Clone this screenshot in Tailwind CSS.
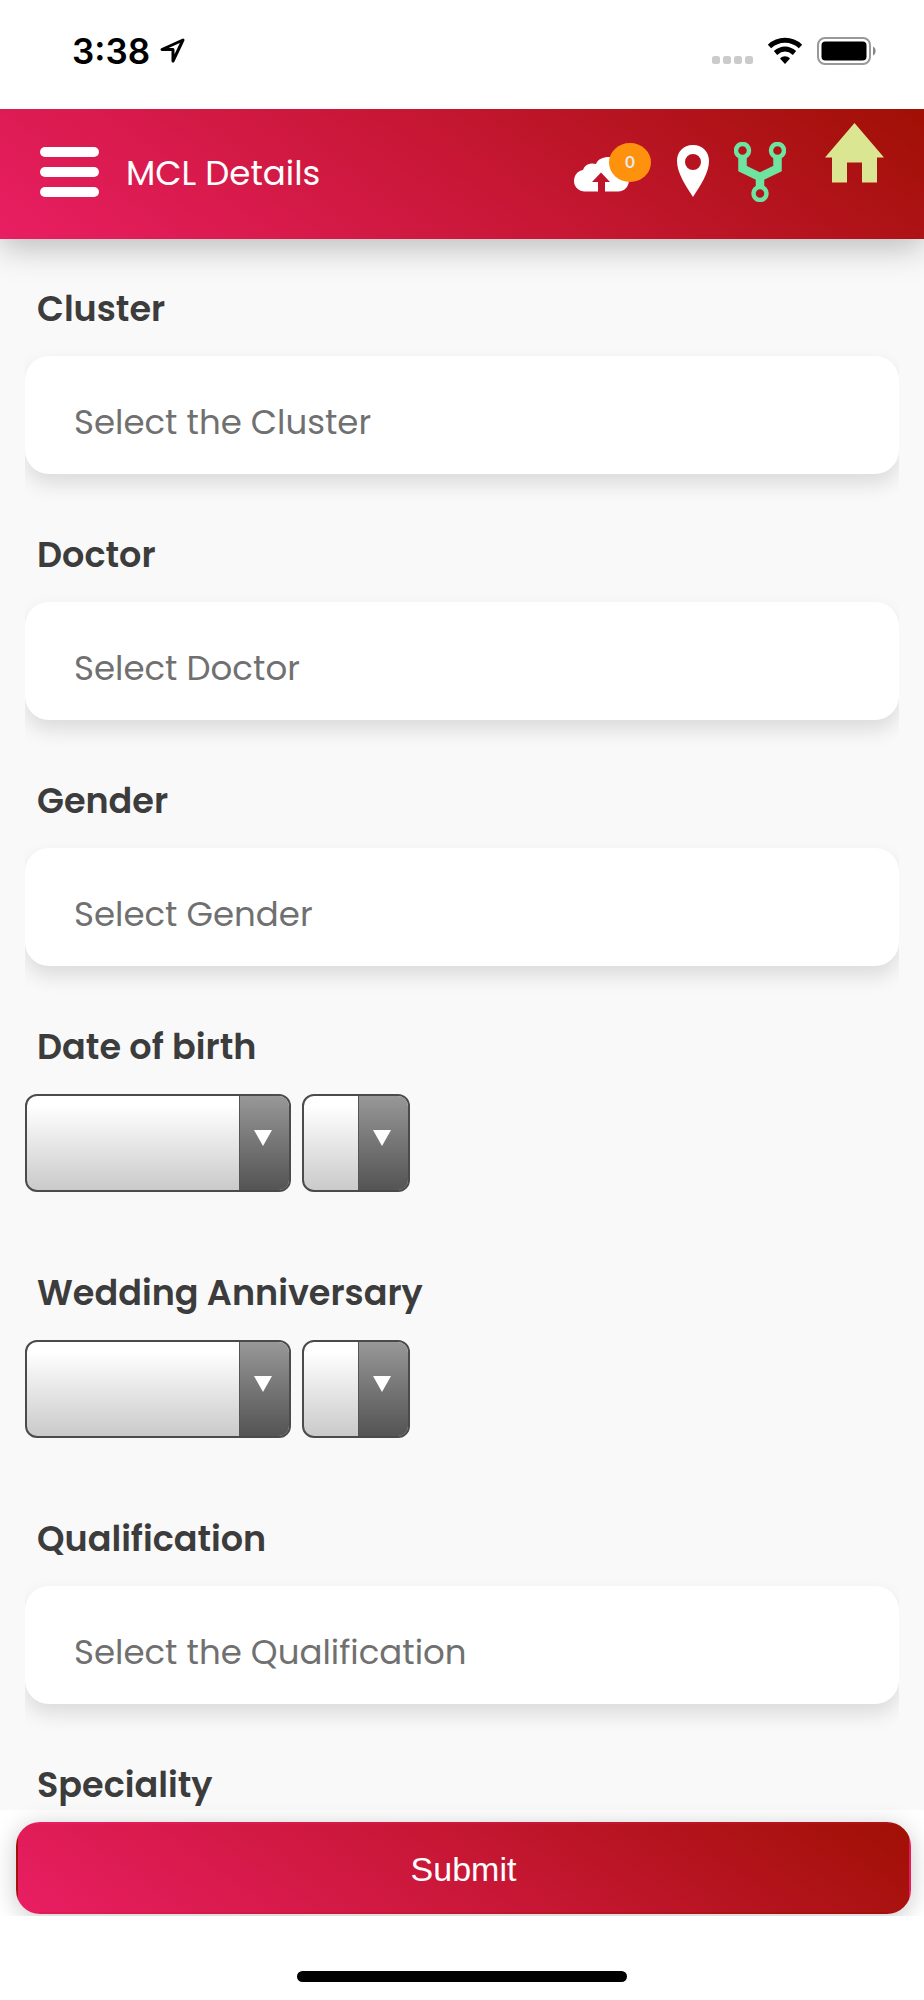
<!DOCTYPE html>
<html lang="en">
<head>
  <meta charset="UTF-8">
  <meta name="viewport" content="width=device-width, initial-scale=1.0">
  <title>MCL Details</title>
  <script src="https://cdn.jsdelivr.net/npm/@tailwindcss/browser@4"></script>
</head>
<body class="bg-white font-['Poppins','Inter',sans-serif] text-[34px] text-[#3c3c3c]">
  <div class="flex flex-col min-h-screen">

    <!-- Status bar -->
    <div class="relative z-20 flex items-center justify-between h-[109px] pl-[72px] pr-12 pb-2 bg-white text-black">
      <div class="flex items-center gap-2">
        <span class="font-['Inter',sans-serif] text-[35px] leading-10 font-semibold">3:38</span>
        <svg class="w-7 h-7" viewBox="0 0 28 28" fill="none" stroke="currentColor" stroke-width="3" stroke-linejoin="round">
          <path d="M25 3 4 12.500H15V24Z" />
        </svg>
      </div>
      <div class="flex items-center gap-[13px]">
        <svg class="w-[42px] h-7" viewBox="0 0 42 28" fill="#cbcbcb">
          <rect x="0" y="19" width="8" height="8" rx="2.500" />
          <rect x="11" y="19" width="8" height="8" rx="2.500" />
          <rect x="22" y="19" width="8" height="8" rx="2.500" />
          <rect x="33" y="19" width="8" height="8" rx="2.500" />
        </svg>
        <svg class="w-9 h-7" viewBox="0 0 36 28" fill="none" stroke="currentColor" stroke-width="5">
          <path d="M2.500 9.500C11.500 1.300 24.500 1.300 33.500 9.500" />
          <path d="M8.500 16C14.500 10.800 21.500 10.800 27.500 16" />
          <path d="M13 21.500C16 18.500 20 18.500 23 21.500L18 27Z" fill="currentColor" stroke="none" />
        </svg>
        <svg class="w-[60px] h-7" viewBox="0 0 60 28">
          <rect x="2" y="1" width="52" height="26" rx="7" fill="none" stroke="#999" stroke-width="2" />
          <rect x="5.500" y="4.500" width="45" height="19" rx="4" />
          <path d="M57 9.500C60.500 11 60.500 17 57 18.500Z" fill="#888" />
        </svg>
      </div>
    </div>

    <!-- Header -->
    <header class="relative z-10 flex items-center h-[130px] px-10 pb-1 bg-linear-[35deg,#e91e63,#c81736_50%,#a01004] shadow-[0_8px_32px_rgba(0,0,0,0.26)] text-white">
      <button type="button" aria-label="Menu" class="flex flex-col gap-2.5 w-[59px]">
        <span class="h-2.5 rounded-full bg-white"></span>
        <span class="h-2.5 rounded-full bg-white"></span>
        <span class="h-2.5 rounded-full bg-white"></span>
      </button>
      <h1 class="ml-[27px] pt-0.5 font-normal">MCL Details</h1>

      <div class="flex items-center self-stretch ml-auto">
        <button type="button" aria-label="Upload" class="relative w-[77px] h-[60px]">
          <svg class="w-[77px] h-[60px]" viewBox="0 0 77 60" fill="currentColor">
            <path d="M11 49.500H24V40H18L27 30.500 36 40H31V49.500H44C51 49.500 55 44 55 38 55 26 48 15 35 15 29 15 24 17 22 22 17 20.500 11 22 9 28 3 29 0 34 0 39 0 45 5 49.500 11 49.500Z" />
          </svg>
          <span class="absolute right-0 top-px flex items-center justify-center w-[42px] h-[39px] pb-0.5 rounded-[50%] bg-[#ff920c] font-['Inter',sans-serif] text-base font-semibold text-gray-200">0</span>
        </button>
        <button type="button" aria-label="Location" class="ml-[25px]">
          <svg class="w-[34px] h-[54px]" viewBox="0 0 34 54" fill="currentColor">
            <path fill-rule="evenodd" d="M17 0C7 0 1 7 1 16 1 28 10 41 17 52 24 41 33 28 33 16 33 7 27 0 17 0ZM17 9A8 8 0 1 1 17 25 8 8 0 0 1 17 9Z" />
          </svg>
        </button>
        <button type="button" aria-label="Hierarchy" class="ml-6">
          <svg class="w-[52px] h-[60px]" viewBox="0 0 52 60" fill="none" stroke="#6fe3a0">
            <circle cx="8.500" cy="8.500" r="6.500" stroke-width="4.500" />
            <circle cx="43.500" cy="8.500" r="6.500" stroke-width="4.500" />
            <circle cx="26" cy="51.500" r="6.500" stroke-width="4.500" />
            <path d="M8.500 16V26.500L26 35 43.500 26.500V16M26 34V44" stroke-width="8.500" />
          </svg>
        </button>
        <a href="#" aria-label="Home" class="self-start mt-3.5 ml-[39px]">
          <svg class="w-[59px] h-[60px]" viewBox="0 0 59 60" fill="#dbe692">
            <path d="M29.500 0 59 34.500H52V59.500H37V39.500H22V59.500H7V34.500H0Z" />
          </svg>
        </a>
      </div>
    </header>

    <!-- Form -->
    <form id="mcl-form" class="flex-1 px-[25px] pt-[46px] bg-[#f9f9f9]">
      <div class="overflow-x-clip pb-[57px]">
        <label for="cluster" class="block pl-3 text-[35px] leading-12 font-semibold">Cluster</label>
        <input id="cluster" type="text" placeholder="Select the Cluster" class="block w-full h-[118px] mt-[23px] px-[49px] pt-3.5 rounded-3xl bg-white shadow-[0_10px_20px_rgba(0,0,0,0.12)] outline-none placeholder:text-[#707070]">
      </div>

      <div class="overflow-x-clip pb-[57px]">
        <label for="doctor" class="block pl-3 text-[35px] leading-12 font-semibold">Doctor</label>
        <input id="doctor" type="text" placeholder="Select Doctor" class="block w-full h-[118px] mt-[23px] px-[49px] pt-3.5 rounded-3xl bg-white shadow-[0_10px_20px_rgba(0,0,0,0.12)] outline-none placeholder:text-[#707070]">
      </div>

      <div class="overflow-x-clip pb-[57px]">
        <label for="gender" class="block pl-3 text-[35px] leading-12 font-semibold">Gender</label>
        <input id="gender" type="text" placeholder="Select Gender" class="block w-full h-[118px] mt-[23px] px-[49px] pt-3.5 rounded-3xl bg-white shadow-[0_10px_20px_rgba(0,0,0,0.12)] outline-none placeholder:text-[#707070]">
      </div>

      <div class="pb-[77px]">
        <label for="dob-month" class="block pl-3 text-[35px] leading-12 font-semibold">Date of birth</label>
        <div class="flex gap-[11px] mt-[23px]">
          <div class="relative">
            <select id="dob-month" class="block appearance-none w-[266px] h-[98px] rounded-xl border-2 border-[#4b4b4b] bg-linear-to-b from-white from-10% to-[#cacaca]"></select>
            <span class="absolute inset-y-0.5 right-0.5 flex items-center justify-center w-[50px] pr-1 pb-2.5 rounded-r-[10px] border-l border-[#555] bg-linear-to-b from-[#989898] to-[#545454] pointer-events-none">
              <svg class="w-[18px] h-4" viewBox="0 0 18 16" fill="#fff"><path d="M0 0H18L9 16Z" /></svg>
            </span>
          </div>
          <div class="relative">
            <select id="dob-day" aria-label="Day of birth" class="block appearance-none w-[108px] h-[98px] rounded-xl border-2 border-[#4b4b4b] bg-linear-to-b from-white from-10% to-[#cacaca]"></select>
            <span class="absolute inset-y-0.5 right-0.5 flex items-center justify-center w-[50px] pr-1 pb-2.5 rounded-r-[10px] border-l border-[#555] bg-linear-to-b from-[#989898] to-[#545454] pointer-events-none">
              <svg class="w-[18px] h-4" viewBox="0 0 18 16" fill="#fff"><path d="M0 0H18L9 16Z" /></svg>
            </span>
          </div>
        </div>
      </div>

      <div class="pb-[77px]">
        <label for="wedding-month" class="block pl-3 text-[35px] leading-12 font-semibold">Wedding Anniversary</label>
        <div class="flex gap-[11px] mt-[23px]">
          <div class="relative">
            <select id="wedding-month" class="block appearance-none w-[266px] h-[98px] rounded-xl border-2 border-[#4b4b4b] bg-linear-to-b from-white from-10% to-[#cacaca]"></select>
            <span class="absolute inset-y-0.5 right-0.5 flex items-center justify-center w-[50px] pr-1 pb-2.5 rounded-r-[10px] border-l border-[#555] bg-linear-to-b from-[#989898] to-[#545454] pointer-events-none">
              <svg class="w-[18px] h-4" viewBox="0 0 18 16" fill="#fff"><path d="M0 0H18L9 16Z" /></svg>
            </span>
          </div>
          <div class="relative">
            <select id="wedding-day" aria-label="Wedding day" class="block appearance-none w-[108px] h-[98px] rounded-xl border-2 border-[#4b4b4b] bg-linear-to-b from-white from-10% to-[#cacaca]"></select>
            <span class="absolute inset-y-0.5 right-0.5 flex items-center justify-center w-[50px] pr-1 pb-2.5 rounded-r-[10px] border-l border-[#555] bg-linear-to-b from-[#989898] to-[#545454] pointer-events-none">
              <svg class="w-[18px] h-4" viewBox="0 0 18 16" fill="#fff"><path d="M0 0H18L9 16Z" /></svg>
            </span>
          </div>
        </div>
      </div>

      <div class="overflow-x-clip pb-[57px]">
        <label for="qualification" class="block pl-3 text-[35px] leading-12 font-semibold">Qualification</label>
        <input id="qualification" type="text" placeholder="Select the Qualification" class="block w-full h-[118px] mt-[23px] px-[49px] pt-3.5 rounded-3xl bg-white shadow-[0_10px_20px_rgba(0,0,0,0.12)] outline-none placeholder:text-[#707070]">
      </div>

      <p class="pl-3 text-[35px] leading-12 font-semibold">Speciality</p>
    </form>

    <!-- Submit -->
    <div class="relative pt-3 pb-0.5 pl-4 pr-[13px] bg-white">
      <button type="submit" form="mcl-form" class="block w-full h-[92px] pt-0.5 rounded-3xl border-2 border-transparent bg-linear-[35deg,#e91e63,#c81736_50%,#a01004] shadow-[0_4px_24px_rgba(0,0,0,0.22)] font-['Liberation_Sans',Arial,sans-serif] text-white">Submit</button>
    </div>

    <!-- Home indicator -->
    <div class="relative flex justify-center h-[84px] pt-[55px] bg-white">
      <span class="w-[330px] h-[11px] rounded-full bg-black"></span>
    </div>
  </div>
</body>
</html>
